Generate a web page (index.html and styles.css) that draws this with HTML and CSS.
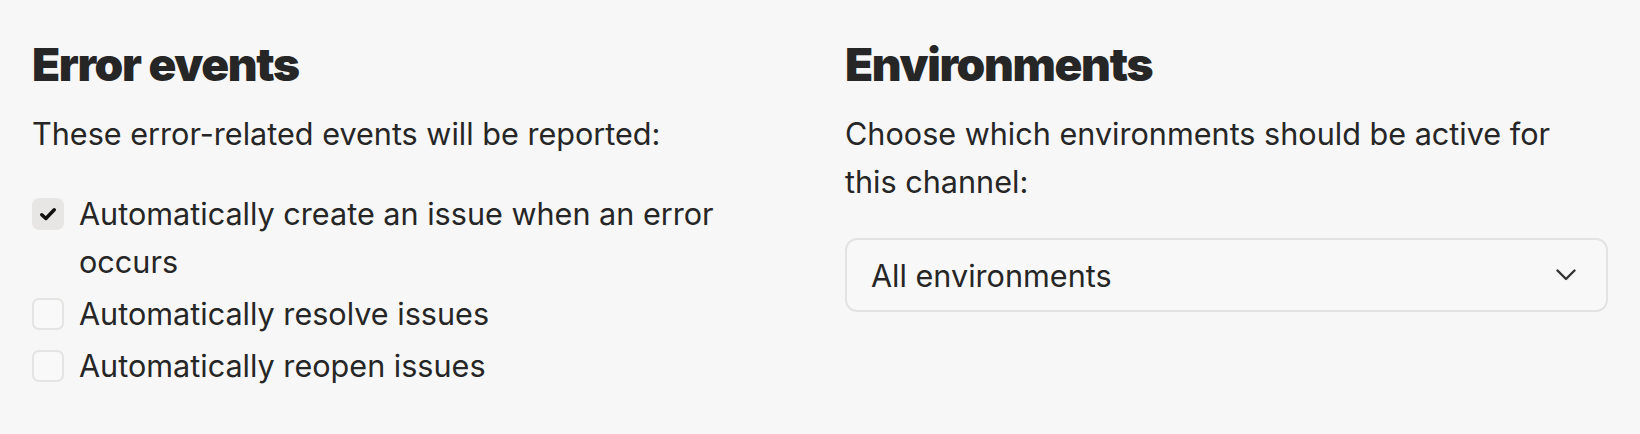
FILE: index.html
```html
<!DOCTYPE html>
<html lang="en">
<head>
  <meta charset="UTF-8">
  <meta name="viewport" content="width=device-width, initial-scale=1.0">
  <title>Channel settings</title>
  <link rel="stylesheet" href="styles.css">
</head>
<body>
  <div id="settings">
    <section class="panel">
      <h2>Error events</h2>
      <p class="hint">These error-related events will be reported:</p>
      <ul class="options">
        <li class="option">
          <span class="box checked">
            <svg viewBox="0 0 16 16" width="20" height="20"><path d="M3 8.6 6.3 11.6 13 4.6" fill="none" stroke="currentColor" stroke-width="2.8" stroke-linecap="round" stroke-linejoin="round"/></svg>
          </span>
          <span class="label">Automatically create an issue when an error occurs</span>
        </li>
        <li class="option">
          <span class="box"></span>
          <span class="label">Automatically resolve issues</span>
        </li>
        <li class="option">
          <span class="box"></span>
          <span class="label">Automatically reopen issues</span>
        </li>
      </ul>
    </section>

    <section class="panel">
      <h2>Environments</h2>
      <p class="hint">Choose which environments should be active for this channel:</p>
      <button class="select" type="button">
        <span>All environments</span>
        <svg viewBox="0 0 20 12" width="20" height="12"><path d="M1.5 1.5 10 10 18.5 1.5" fill="none" stroke="currentColor" stroke-width="2.4" stroke-linecap="round" stroke-linejoin="round"/></svg>
      </button>
    </section>
  </div>
</body>
</html>
```

FILE: styles.css
```css
body {
  margin: 0;
  background-color: #f7f7f7;
  color: #262626;
  font-family: Inter, "Noto Sans", sans-serif;
}

#settings {
  display: grid;
  grid-template-columns: 1fr 1fr;
  gap: 50px;
  padding: 37px 32px 0;
}

h2 {
  margin: 0;
  font-size: 46px;
  line-height: 55px;
  font-weight: 900;
  letter-spacing: -1.35px;
  color: #262626;
}

.hint {
  margin: 18px 0 32px;
  font-size: 30.6px;
  line-height: 48px;
}

.options {
  list-style: none;
  margin: 0;
  padding: 0;
  display: flex;
  flex-direction: column;
  gap: 4px;
}

.option {
  display: flex;
  align-items: flex-start;
  gap: 15px;
  font-size: 30.6px;
  line-height: 48px;
}

.box {
  flex: none;
  width: 28px;
  height: 28px;
  margin-top: 8px;
  border: 2px solid #e6e4e2;
  border-radius: 7px;
  background-color: #f9f9f9;
  display: flex;
  align-items: center;
  justify-content: center;
  color: #111111;
}

.box.checked {
  background-color: #e8e6e4;
  border-color: #e8e6e4;
}

.select {
  width: 100%;
  height: 74px;
  padding: 0 30px 0 24px;
  border: 2px solid #e3e3e3;
  border-radius: 12px;
  background-color: #f8f8f8;
  color: #262626;
  font-family: inherit;
  font-size: 30.6px;
  display: flex;
  align-items: center;
  justify-content: space-between;
  cursor: pointer;
}

.select svg {
  color: #333333;
}
```
